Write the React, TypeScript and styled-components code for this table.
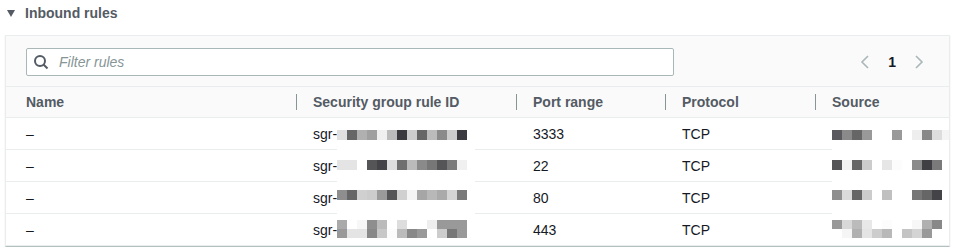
import styled, { createGlobalStyle } from 'styled-components';

const GlobalStyle = createGlobalStyle`
  body {
    margin: 0;
    background: #ffffff;
    font-family: "Liberation Sans", Arial, sans-serif;
    color: #16191f;
  }
`;

const rules = [
  { port: '3333', protocol: 'TCP' },
  { port: '22', protocol: 'TCP' },
  { port: '80', protocol: 'TCP' },
  { port: '443', protocol: 'TCP' },
];

// pixelated blur that hides the ids and sources
const idBlocks = [
  'e0e0e0 666666 b0b0b0 a0a0a0 f0f0f0 bbbbbb 3a3a3e cccccc 666666 bbbbbb 8a8a8a cccccc 3a3a40',
  'e4e4e4 e4e4e4 ffffff 555558 444448 dddddd 6f6f6f bbbbbb 8a8a8a 777777 555558 7a7a7a f0f0f0',
  '8e8e8e 666666 d0d0d0 cccccc 9a9a9a 555558 d0d0d0 f4f4f4 a6a6a6 b8b8b8 aaaaaa d4d4d4 7a7a7a',
  'aaaaaa ffffff f7f7f7 8e8e8e bbbbbb ffffff dddddd ffffff ffffff eeeeee 999999 999999 999999',
  '999999 e4e4e4 e4e4e4 888888 c8c8c8 fcfcfc bbbbbb 888888 999999 ffffff cccccc 777777 999999',
];

const sourceBlocks = [
  '5a5a5e 8a8a8a 666666 999999 ffffff ffffff 999999 ffffff eeeeee 888888 dddddd f4f4f4',
  '555558 f2f2f2 666666 cccccc ffffff e6e6e6 fcfcfc ffffff 8a8a8a 3f3f44 7a7a7a ffffff',
  '8e8e8e dadada 666666 cccccc ffffff c0c0c0 ffffff ffffff 777777 666666 444448 ffffff',
  '999999 d8d8d8 bbbbbb e8e8e8 ffffff fcfcfc ffffff ffffff f7f7f7 b0b0b0 888888 ffffff',
  'ffffff f5f5f5 b0b0b0 e4e4e4 cccccc b8b8b8 ffffff c4c4c4 d4d4d4 999999 ffffff ffffff',
];

const blockRows = [
  { y: 12, h: 10 },
  { y: 42, h: 10 },
  { y: 72, h: 10 },
  { y: 102, h: 9 },
  { y: 111, h: 9 },
];

const Mosaic = ({ data, left, width }: { data: string[]; left: number; width: number }) => (
  <Redaction $left={left} $width={width}>
    <svg width={width} height={127}>
      {data.map((line, r) =>
        line.split(' ').map((c, i) => (
          <rect
            key={`${r}-${i}`}
            x={i * 10}
            y={blockRows[r].y}
            width={10}
            height={blockRows[r].h}
            fill={`#${c}`}
          />
        ))
      )}
    </svg>
  </Redaction>
);

const App = () => {
  return (
    <Page>
      <GlobalStyle />
      <SectionTitle>
        <svg width="8" height="7" viewBox="0 0 8 7">
          <polygon points="0,0 8,0 4,7" fill="#545b64" />
        </svg>
        Inbound rules
      </SectionTitle>
      <Panel>
        <Toolbar>
          <FilterBox>
            <svg width="16" height="16" viewBox="0 0 16 16">
              <circle cx="7" cy="7" r="5" fill="none" stroke="#545b64" strokeWidth="2" />
              <line x1="10.5" y1="10.5" x2="14.5" y2="14.5" stroke="#545b64" strokeWidth="2" />
            </svg>
            <FilterInput placeholder="Filter rules" />
          </FilterBox>
          <Pagination>
            <svg width="10" height="16" viewBox="0 0 10 16">
              <polyline points="8,2 2,8 8,14" fill="none" stroke="#aab7b8" strokeWidth="1.6" />
            </svg>
            <PageNum>1</PageNum>
            <svg width="10" height="16" viewBox="0 0 10 16">
              <polyline points="2,2 8,8 2,14" fill="none" stroke="#aab7b8" strokeWidth="1.6" />
            </svg>
          </Pagination>
        </Toolbar>
        <HeaderRow>
          <HeaderCell>Name</HeaderCell>
          <HeaderCell $divider>Security group rule ID</HeaderCell>
          <HeaderCell $divider>Port range</HeaderCell>
          <HeaderCell $divider>Protocol</HeaderCell>
          <HeaderCell $divider>Source</HeaderCell>
        </HeaderRow>
        <Body>
          {rules.map(rule => (
            <BodyRow key={rule.port}>
              <Cell>–</Cell>
              <Cell>sgr-</Cell>
              <Cell>{rule.port}</Cell>
              <Cell>{rule.protocol}</Cell>
              <Cell />
            </BodyRow>
          ))}
          <Mosaic data={idBlocks} left={331} width={138} />
          <Mosaic data={sourceBlocks} left={826} width={118} />
        </Body>
      </Panel>
    </Page>
  );
};

const Page = styled.div`
  padding: 3px 6px 0 5px;
`;

const SectionTitle = styled.div`
  display: flex;
  align-items: center;
  gap: 10px;
  height: 20px;
  padding-left: 2px;
  margin-bottom: 12px;
  font-size: 14px;
  font-weight: 700;
  color: #545b64;
`;

const Panel = styled.div`
  border: 1px solid #eaeded;
  border-bottom-color: #b4bfc0;
  box-shadow: 0 1px 1px rgba(0, 28, 36, 0.15);
  overflow: hidden;
`;

const Toolbar = styled.div`
  display: flex;
  justify-content: space-between;
  align-items: flex-start;
  box-sizing: border-box;
  height: 51px;
  padding: 12px 25px 0 20px;
  background-color: #fafafa;
  border-bottom: 1px solid #eaeded;
`;

const FilterBox = styled.div`
  display: flex;
  align-items: center;
  gap: 10px;
  box-sizing: border-box;
  width: 648px;
  height: 28px;
  padding-left: 6px;
  background-color: #ffffff;
  border: 1px solid #aab7b8;
  border-radius: 2px;
`;

const FilterInput = styled.input`
  flex: 1;
  border: none;
  outline: none;
  padding: 0;
  font-family: inherit;
  font-size: 14px;
  color: #16191f;
  background: transparent;
  &::placeholder {
    color: #879596;
    font-style: italic;
  }
`;

const Pagination = styled.div`
  display: flex;
  align-items: center;
  gap: 18px;
  height: 28px;
`;

const PageNum = styled.span`
  font-size: 14px;
  font-weight: 700;
  color: #16191f;
`;

const gridColumns = '290px 220px 149px 150px 1fr';

const HeaderRow = styled.div`
  display: grid;
  grid-template-columns: ${gridColumns};
  height: 30px;
  background-color: #fafafa;
  border-bottom: 1px solid #eaeded;
  font-size: 14px;
  font-weight: 700;
  color: #545b64;
`;

const HeaderCell = styled.div<{ $divider?: boolean }>`
  display: flex;
  align-items: center;
  padding-left: ${props => (props.$divider ? '0' : '20px')};
  &::before {
    content: '';
    display: ${props => (props.$divider ? 'block' : 'none')};
    width: 1px;
    height: 16px;
    margin-right: 16px;
    background-color: #879596;
  }
`;

const Body = styled.div`
  position: relative;
`;

const BodyRow = styled.div`
  display: grid;
  grid-template-columns: ${gridColumns};
  height: 31px;
  border-bottom: 1px solid #eaeded;
  font-size: 14px;
  color: #16191f;
  &:last-of-type {
    border-bottom: none;
  }
`;

const Cell = styled.div`
  display: flex;
  align-items: center;
  padding-left: 17px;
  &:first-child {
    padding-left: 20px;
  }
`;

const Redaction = styled.div<{ $left: number; $width: number }>`
  position: absolute;
  top: 0;
  left: ${props => props.$left}px;
  width: ${props => props.$width}px;
  height: 127px;
  background-color: #ffffff;
  svg {
    display: block;
  }
`;

export default App;
